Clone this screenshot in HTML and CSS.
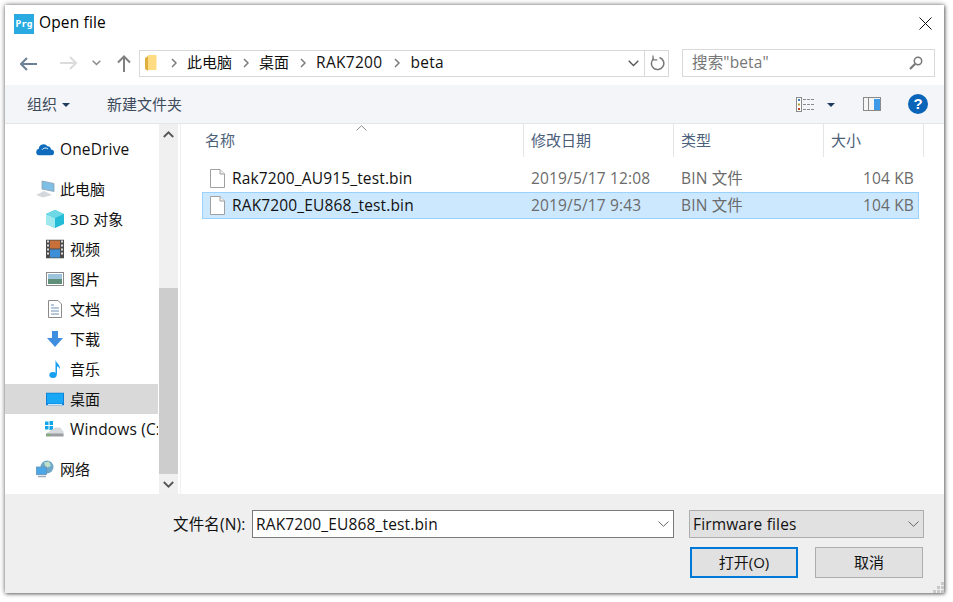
FILE: index.html
```html
<!DOCTYPE html>
<html lang="zh-CN">
<head>
<meta charset="utf-8">
<title>Open file</title>
<link rel="stylesheet" href="styles.css">
</head>
<body>
<div class="window">
  <header class="titlebar">
    <span class="app-icon">Prg</span>
    <span class="title lat">Open file</span>
    <svg class="close" width="13" height="13" viewBox="0 0 13 13"><path d="M0.5 0.5L12.500 12.500M12.500 0.5L0.5 12.500" stroke="#111" fill="none"/></svg>
  </header>

  <div class="addressrow">
    <svg class="nav back" width="18" height="14" viewBox="0 0 18 14"><path d="M1 7H17M7 1L1 7L7 13" stroke="#6d8196" stroke-width="2" fill="none"/></svg>
    <svg class="nav fwd" width="18" height="14" viewBox="0 0 18 14"><path d="M1 7H17M11 1L17 7L11 13" stroke="#dcdcdc" stroke-width="2" fill="none"/></svg>
    <svg class="nav recent" width="9" height="6" viewBox="0 0 9 6"><path d="M0.700 0.700L4.500 4.500L8.300 0.700" stroke="#8a8a8a" stroke-width="1.500" fill="none"/></svg>
    <svg class="nav up" width="14" height="17" viewBox="0 0 14 17"><path d="M7 17V2M1 7.500L7 1.500L13 7.500" stroke="#808080" stroke-width="2" fill="none"/></svg>
    <div class="breadcrumb">
      <svg class="crumb-folder" width="12" height="17" viewBox="0 0 12 17"><path d="M0 3L3 1V16L0 14Z" fill="#e0b040"/><path d="M3 0H11.500V15H3Z" fill="#ffdc82"/></svg>
      <svg class="chev first" width="6" height="10" viewBox="0 0 6 10"><path d="M1 1L5 5L1 9" stroke="#7a7a7a" stroke-width="1.500" fill="none"/></svg>
      <span class="crumb">此电脑</span>
      <svg class="chev" width="6" height="10" viewBox="0 0 6 10"><path d="M1 1L5 5L1 9" stroke="#7a7a7a" stroke-width="1.500" fill="none"/></svg>
      <span class="crumb">桌面</span>
      <svg class="chev" width="6" height="10" viewBox="0 0 6 10"><path d="M1 1L5 5L1 9" stroke="#7a7a7a" stroke-width="1.500" fill="none"/></svg>
      <span class="crumb lat">RAK7200</span>
      <svg class="chev last" width="6" height="10" viewBox="0 0 6 10"><path d="M1 1L5 5L1 9" stroke="#7a7a7a" stroke-width="1.500" fill="none"/></svg>
      <span class="crumb lat">beta</span>
      <span class="crumb-spacer"></span>
      <span class="crumb-drop"><svg width="11" height="7" viewBox="0 0 11 7"><path d="M0.700 0.700L5.500 5.500L10.300 0.700" stroke="#555" stroke-width="1.300" fill="none"/></svg></span>
      <span class="crumb-refresh"><svg width="15" height="16" viewBox="0 0 15 16"><path d="M9.500 2.500A6.200 6.200 0 1 1 3.800 3.500" stroke="#777" stroke-width="1.500" fill="none"/><path d="M3 0.500V4.800H7.300" stroke="#777" stroke-width="1.300" fill="none"/></svg></span>
    </div>
    <div class="search">
      <span class="search-text lat">搜索"beta"</span>
      <svg width="14" height="14" viewBox="0 0 14 14"><circle cx="9" cy="5" r="3.700" stroke="#777" stroke-width="1.500" fill="none"/><path d="M6 8L1 13" stroke="#777" stroke-width="2.200"/></svg>
    </div>
  </div>

  <div class="toolbar">
    <span class="tool organize">组织</span>
    <span class="caret"></span>
    <span class="tool newfolder">新建文件夹</span>
    <span class="tool-spacer"></span>
    <svg class="viewicon" width="18" height="15" viewBox="0 0 18 15"><rect x="0.500" y="0.500" width="5" height="14" fill="#fff" stroke="#8a8a8a"/><rect x="2" y="2" width="2" height="2" fill="#3f7fc0"/><rect x="2" y="6.500" width="2" height="2" fill="#b8a030"/><rect x="2" y="11" width="2" height="2" fill="#c04020"/><path d="M7 2.500H18M7 7.500H18M7 12.500H18" stroke="#8a8a8a" stroke-dasharray="3 1"/></svg>
    <span class="caret view-caret"></span>
    <svg class="paneicon" width="18" height="14" viewBox="0 0 18 14"><rect x="0.500" y="0.500" width="17" height="13" fill="#f5f5f5" stroke="#8a8a8a"/><rect x="5" y="1" width="1" height="12" fill="#8a8a8a"/><rect x="11" y="2" width="6" height="11" fill="#3f9be8"/></svg>
    <span class="help">?</span>
  </div>

  <div class="main">
    <nav class="sidebar">
      <div class="tree">
        <div class="navrow root">
          <svg width="18" height="13" viewBox="0 0 18 13"><path d="M3.500 13A3.400 3.400 0 0 1 2.800 6.300A4.800 4.800 0 0 1 11.500 3.800A3.700 3.700 0 0 1 15 7A3 3 0 0 1 15 13Z" fill="#0f6cbd"/><path d="M6 7.300A4 4 0 0 1 12 6.500" stroke="#fff" stroke-width="0.900" fill="none"/></svg>
          <span class="label lat">OneDrive</span>
        </div>
        <div class="navgroup">
          <div class="navrow root">
            <svg width="19" height="18" viewBox="0 0 19 18"><path d="M6 1L18 3.500V11.500L6 9Z" fill="#7fbfe6" stroke="#8aa0b0" stroke-width="0.800"/><path d="M0 15L8 11L16 15L7 17.500Z" fill="#d4d8dc"/></svg>
            <span class="label">此电脑</span>
          </div>
          <div class="navrow">
            <svg width="18" height="18" viewBox="0 0 18 18"><path d="M9 0L18 4V14L9 18L0 14V4Z" fill="#25bcd8"/><path d="M0 4L9 8V18L0 14Z" fill="#9fe8ee"/><path d="M0 4L9 0L18 4L9 8Z" fill="#6fd8e6"/></svg>
            <span class="label">3D 对象</span>
          </div>
          <div class="navrow">
            <svg width="18" height="19" viewBox="0 0 18 19"><rect width="18" height="19" fill="#4a4a4a"/><rect x="4" y="1" width="10" height="8" fill="#c8703a"/><rect x="4" y="10" width="10" height="8" fill="#3f8fd8"/><path d="M1 2H3M1 6H3M1 10H3M1 14H3M15 2H17M15 6H17M15 10H17M15 14H17" stroke="#ddd" stroke-width="2"/></svg>
            <span class="label">视频</span>
          </div>
          <div class="navrow">
            <svg width="18" height="14" viewBox="0 0 18 14"><rect x="0.500" y="0.500" width="17" height="13" fill="#fff" stroke="#8a8a8a"/><rect x="2" y="2" width="14" height="5" fill="#9cc4dc"/><rect x="2" y="7" width="14" height="5" fill="#5f8f78"/></svg>
            <span class="label">图片</span>
          </div>
          <div class="navrow">
            <svg class="ic-doc" width="14" height="18" viewBox="0 0 14 18"><path d="M0.500 0.500H10L13.500 4V17.500H0.500Z" fill="#fff" stroke="#8a8a8a"/><path d="M3 5H6M3 8H11M3 11H11M3 14H11" stroke="#6b90b8"/></svg>
            <span class="label">文档</span>
          </div>
          <div class="navrow">
            <svg class="ic-dl" width="16" height="16" viewBox="0 0 16 16"><path d="M5 0H11V7H16L8 16L0 7H5Z" fill="#3f8fe0"/></svg>
            <span class="label">下载</span>
          </div>
          <div class="navrow">
            <svg class="ic-music" width="12" height="19" viewBox="0 0 12 19"><ellipse cx="4" cy="15.500" rx="3.700" ry="3" fill="#18a0f0"/><path d="M6.500 15V0.500C7.500 4 11.500 5 11 10C10.500 8 9 7 8 7V15Z" fill="#18a0f0"/></svg>
            <span class="label">音乐</span>
          </div>
          <div class="navrow active">
            <svg width="18" height="13" viewBox="0 0 18 13"><rect width="18" height="13" fill="#0f7fd8"/><rect x="1" y="1" width="16" height="10" fill="#18a8f5"/><rect x="2" y="11.500" width="14" height="1" fill="#cfe8f8"/></svg>
            <span class="label">桌面</span>
          </div>
          <div class="navrow">
            <svg class="ic-drive" width="19" height="17" viewBox="0 0 19 17"><path d="M0 1H3.500V4.500H0ZM4.500 0.500H8V4.500H4.500ZM0 5.500H3.500V9H0ZM4.500 5.500H8V9.500H4.500Z" fill="#0fa5e8"/><path d="M1 13L10 7H15L18.500 11V15.500H3L1 15Z" fill="#d8dadc"/><rect x="1" y="13" width="17.500" height="3" fill="#9a9ea2"/><rect x="2" y="13.800" width="3" height="1.200" fill="#60c040"/></svg>
            <span class="label lat">Windows (C:)</span>
          </div>
        </div>
        <div class="navrow root">
          <svg width="18" height="18" viewBox="0 0 18 18"><circle cx="11" cy="7" r="6.500" fill="#6fa8c8"/><path d="M8 2.500L13 1.500L15 6L10 8Z" fill="#bfe0c8"/><rect x="0.500" y="7" width="10" height="7.500" fill="#4aa8e8" stroke="#6890b0" stroke-width="0.800"/><path d="M2 16.500H10" stroke="#9ab" stroke-width="1.500"/></svg>
          <span class="label">网络</span>
        </div>
      </div>
      <div class="scrollbar">
        <button class="sb-btn"><svg width="11" height="7" viewBox="0 0 11 7"><path d="M0.800 6L5.500 1.300L10.200 6" stroke="#555" stroke-width="1.800" fill="none"/></svg></button>
        <div class="sb-track"><div class="sb-thumb"></div></div>
        <button class="sb-btn"><svg width="11" height="7" viewBox="0 0 11 7"><path d="M0.800 1L5.500 5.700L10.200 1" stroke="#555" stroke-width="1.800" fill="none"/></svg></button>
      </div>
    </nav>

    <section class="files">
      <div class="header">
        <svg class="sort" width="11" height="6" viewBox="0 0 11 6"><path d="M0.500 5.500L5.500 0.700L10.500 5.500" stroke="#8a8a8a" fill="none"/></svg>
        <div class="col c-name first-col"><span>名称</span></div>
        <div class="col c-date"><span>修改日期</span></div>
        <div class="col c-type"><span>类型</span></div>
        <div class="col c-size"><span>大小</span></div>
      </div>
      <div class="row">
        <div class="cell c-name name">
          <svg width="15" height="19" viewBox="0 0 15 19"><path d="M0.500 0.500H10L14.500 5V18.500H0.500Z" fill="#fff" stroke="#a0a0a0"/><path d="M10 0.500V5H14.500" fill="#f0f0f0" stroke="#a0a0a0"/></svg>
          <span class="lat up-text">Rak7200_AU915_test.bin</span>
        </div>
        <div class="cell c-date lat">2019/5/17 12:08</div>
        <div class="cell c-type lat">BIN 文件</div>
        <div class="cell c-size num lat">104 KB</div>
      </div>
      <div class="row selected">
        <div class="cell c-name name">
          <svg width="15" height="19" viewBox="0 0 15 19"><path d="M0.500 0.500H10L14.500 5V18.500H0.500Z" fill="#fff" stroke="#a0a0a0"/><path d="M10 0.500V5H14.500" fill="#f0f0f0" stroke="#a0a0a0"/></svg>
          <span class="lat up-text">RAK7200_EU868_test.bin</span>
        </div>
        <div class="cell c-date lat">2019/5/17 9:43</div>
        <div class="cell c-type lat">BIN 文件</div>
        <div class="cell c-size num lat">104 KB</div>
      </div>
    </section>
  </div>

  <footer class="footer">
    <div class="fieldrow">
      <label class="fname-label lat">文件名(N):</label>
      <div class="combo">
        <span class="lat">RAK7200_EU868_test.bin</span>
        <svg width="11" height="6" viewBox="0 0 11 6"><path d="M0.500 0.500L5.500 5.300L10.500 0.500" stroke="#666" fill="none"/></svg>
      </div>
      <div class="filter">
        <span class="lat">Firmware files</span>
        <svg width="11" height="6" viewBox="0 0 11 6"><path d="M0.500 0.500L5.500 5.300L10.500 0.500" stroke="#666" fill="none"/></svg>
      </div>
    </div>
    <div class="buttonrow">
      <button class="btn primary">打开(O)</button>
      <button class="btn">取消</button>
    </div>
    <svg class="grip" width="11" height="11" viewBox="0 0 11 11"><path d="M8 0h3v3H8zM4 4h3v3H4zM8 4h3v3H8zM0 8h3v3H0zM4 8h3v3H4zM8 8h3v3H8z" fill="#c8c8c8"/></svg>
  </footer>
</div>
</body>
</html>
```
FILE: styles.css
```css
* { box-sizing: border-box; }
html, body { margin: 0; padding: 0; background: #fff; }
body {
  width: 953px;
  height: 602px;
  padding: 5px 9px 9px 5px;
  font-family: "Open Sans", "Noto Sans CJK SC", sans-serif;
  font-size: 15px;
  color: #1a1a1a;
  overflow: hidden;
}
.lat { font-size: 15.500px; letter-spacing: 0.150px; }
.up-text { padding-bottom: 2px; }
.window {
  width: 939px;
  height: 588px;
  background: #fff;
  box-shadow: 0 0 5px rgba(0,0,0,.55), 1px 1px 3px rgba(0,0,0,.35);
  display: flex;
  flex-direction: column;
  position: relative;
}
.titlebar {
  height: 36px;
  display: flex;
  align-items: center;
  padding: 0 12px 0 9px;
  flex: none;
}
.app-icon {
  width: 20px;
  height: 20px;
  background: #29abe2;
  color: #fff;
  font: bold 9.500px/20px "DejaVu Sans Mono", monospace;
  text-align: center;
  margin-top: 1px;
}
.title { margin-left: 5px; color: #000; padding-bottom: 2px; }
.close { margin-left: auto; }

.addressrow {
  height: 44px;
  display: flex;
  align-items: center;
  padding: 0 9px 0 15px;
  flex: none;
}
.nav { flex: none; }
.back { margin-top: 1px; }
.fwd { margin-left: 21px; }
.recent { margin-left: 15px; }
.up { margin-left: 16px; }
.breadcrumb {
  margin-left: 8px;
  width: 530px;
  height: 27px;
  border: 1px solid #d9d9d9;
  display: flex;
  align-items: center;
  padding-left: 5px;
}
.chev { margin-left: 11px; margin-right: 10px; flex: none; }
.chev.first { margin-left: 14px; }
.chev.last { margin-left: 12px; }
.crumb-folder { flex: none; }
.crumb { color: #111; padding-bottom: 4px; }
.crumb.lat { padding-bottom: 2px; letter-spacing: 0.300px; }
.crumb-spacer { flex: 1; }
.crumb-drop {
  width: 23px;
  display: flex;
  justify-content: center;
  align-items: center;
  height: 100%;
  border-right: 1px solid #d9d9d9;
}
.crumb-refresh { width: 23px; display: flex; justify-content: center; align-items: center; padding-left: 1px; }
.search {
  margin-left: 13px;
  width: 253px;
  height: 28px;
  border: 1px solid #d9d9d9;
  display: flex;
  align-items: center;
  justify-content: space-between;
  padding: 0 11px 0 9px;
}
.search-text { color: #777; padding-bottom: 4px; }

.toolbar {
  height: 39px;
  background: #f3f5f8;
  border-bottom: 1px solid #e6e6e6;
  display: flex;
  align-items: center;
  padding: 0 16px 0 22px;
  flex: none;
}
.tool { color: #3c4a5c; padding-bottom: 2px; }
.caret {
  width: 0;
  height: 0;
  border-left: 4px solid transparent;
  border-right: 4px solid transparent;
  border-top: 4px solid #1f3a5f;
  margin-left: 5px;
  margin-top: 1px;
}
.newfolder { margin-left: 37px; }
.tool-spacer { flex: 1; }
.view-caret { margin-left: 13px; }
.paneicon { margin-left: 28px; }
.help {
  margin-left: 27px;
  width: 20px;
  height: 20px;
  border-radius: 50%;
  background: #0a64b8;
  color: #fff;
  font: bold 15px/20px "Liberation Sans", sans-serif;
  text-align: center;
}

.main {
  height: 370px;
  display: flex;
  flex: none;
}
.sidebar {
  width: 176px;
  display: flex;
  flex: none;
  border-right: 1px solid #f0f0f0;
}
.tree {
  width: 153px;
  padding-top: 10px;
  flex: none;
  overflow: hidden;
}
.navgroup { margin: 10px 0; }
.navrow {
  height: 30px;
  display: flex;
  align-items: center;
  padding-left: 65px;
  position: relative;
  white-space: nowrap;
  color: #111;
}
.navrow.root { padding-left: 55px; }
.label { padding-bottom: 2px; }
.label.lat { padding-bottom: 0; }
.navrow svg {
  position: absolute;
  left: 41px;
  top: 50%;
  transform: translateY(-50%);
}
.navrow.root svg { left: 31px; }
.navrow svg.ic-doc { left: 43px; }
.navrow svg.ic-dl { left: 42px; }
.navrow svg.ic-music { left: 44px; }
.navrow svg.ic-drive { left: 40px; }
.navrow.active { background: #d9d9d9; }
.scrollbar {
  width: 20px;
  margin-left: 1px;
  background: #f0f0f0;
  display: flex;
  flex-direction: column;
  margin-right: 2px;
}
.sb-btn {
  height: 20px;
  padding: 0;
  border: 0;
  background: none;
  display: flex;
  align-items: center;
  justify-content: center;
  flex: none;
}
.sb-track { flex: 1; padding-top: 144px; display: flex; }
.sb-thumb { flex: 1; background: #cdcdcd; width: 100%; }

.files { flex: 1; position: relative; padding: 0 24px 0 21px; }
.header { height: 33px; display: flex; margin-bottom: 8px; color: #4c607a; }
.sort { position: absolute; left: 175px; top: 1px; }
.col {
  display: flex;
  align-items: center;
  padding-left: 7px;
  border-right: 1px solid #e5e5e5;
}
.col span { padding-bottom: 2px; }
.first-col { padding-left: 3px; }
.c-name { width: 322px; flex: none; }
.c-date { width: 150px; flex: none; }
.c-type { width: 150px; flex: none; }
.c-size { width: 100px; flex: none; }
.row {
  height: 27px;
  display: flex;
  width: 717px;
  align-items: center;
  border: 1px solid transparent;
  color: #6b6b6b;
}
.row.selected { background: #cce8ff; border-color: #99d1ff; }
.cell { padding-left: 7px; padding-bottom: 2px; white-space: nowrap; }
.name {
  display: flex;
  align-items: center;
  gap: 7px;
  color: #111;
  width: 321px;
  padding: 0 0 0 7px;
}
.num { text-align: right; padding: 0 0 2px; width: 90px; }

.footer {
  flex: 1;
  background: #efefef;
  position: relative;
  padding-top: 16px;
}
.fieldrow { display: flex; align-items: center; height: 28px; }
.fname-label { margin-left: 168px; width: 79px; flex: none; white-space: nowrap; color: #111; padding-bottom: 2px; }
.combo {
  width: 422px;
  height: 28px;
  background: #fff;
  border: 1px solid #7a7a7a;
  display: flex;
  align-items: center;
  justify-content: space-between;
  padding: 0 4px 0 3px;
  color: #111;
}
.filter {
  margin-left: 15px;
  width: 235px;
  height: 28px;
  background: #e1e1e1;
  border: 1px solid #adadad;
  display: flex;
  align-items: center;
  justify-content: space-between;
  padding: 0 4px 0 3px;
  color: #111;
}
.buttonrow {
  display: flex;
  gap: 17px;
  margin: 9px 0 0 685px;
}
.btn {
  width: 108px;
  height: 31px;
  background: #e1e1e1;
  border: 1px solid #adadad;
  font: inherit;
  color: #111;
  padding: 0 0 2px;
}
.btn.primary { border: 2px solid #0078d7; }
.grip { position: absolute; right: 0; bottom: 0; }
```
